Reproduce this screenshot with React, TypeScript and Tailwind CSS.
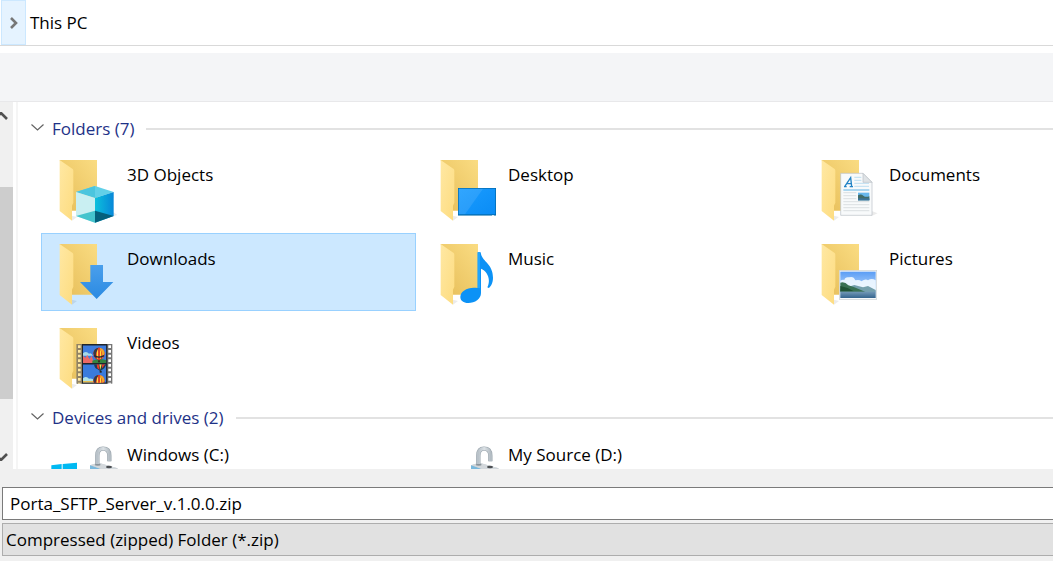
import { useState } from 'react';
import type { ReactNode } from 'react';

type Item = { name: string; art: ReactNode };

function Folder({ children }: { children: ReactNode }) {
  return (
    <svg className="w-16 h-[68px] shrink-0" viewBox="0 0 192 204" fill="none" aria-hidden="true">
      <path d="M51 197V182L66 186Z" fill="#000" opacity=".08" />
      <path d="M14 15H126V167H50Z" fill="url(#folderBack)" />
      <path d="M14 15L53 42Q55 44 55 47V143L51 152V197L14 168Z" fill="url(#folderFront)" />
      {children}
    </svg>
  );
}

// Gradients shared by all the icons
function Gradients() {
  return (
    <svg className="absolute w-0 h-0" aria-hidden="true">
      <defs>
        <linearGradient id="folderBack" x1="0" y1="1" x2="1" y2="0">
          <stop offset="0" stopColor="#e6bd58" />
          <stop offset="1" stopColor="#fadc82" />
        </linearGradient>
        <linearGradient id="folderFront" x1="0" y1="0" x2="1" y2="1">
          <stop offset="0" stopColor="#ffe8a3" />
          <stop offset="1" stopColor="#fddc80" />
        </linearGradient>
        <linearGradient id="screen" x1="0" y1="0" x2="1" y2="1">
          <stop offset="0" stopColor="#1a9cff" />
          <stop offset="1" stopColor="#0a8cf5" />
        </linearGradient>
        <linearGradient id="cubeRight" x1="0" y1="0" x2="1" y2="0">
          <stop offset="0" stopColor="#0cc0dc" />
          <stop offset="1" stopColor="#0787d8" />
        </linearGradient>
        <linearGradient id="arrow" x1="0" y1="0" x2="0" y2="1">
          <stop offset="0" stopColor="#4a9fec" />
          <stop offset="1" stopColor="#2a8ae2" />
        </linearGradient>
        <linearGradient id="sky" x1="0" y1="0" x2="0" y2="1">
          <stop offset="0" stopColor="#5a9df5" />
          <stop offset="1" stopColor="#e2f1fd" />
        </linearGradient>
        <linearGradient id="water" x1="0" y1="0" x2="0" y2="1">
          <stop offset="0" stopColor="#7399b7" />
          <stop offset="1" stopColor="#34648d" />
        </linearGradient>
        <linearGradient id="shackle" x1="0" y1="0" x2="1" y2="0">
          <stop offset="0" stopColor="#b9c2c9" />
          <stop offset=".5" stopColor="#dbe1e5" />
          <stop offset="1" stopColor="#b4bdc4" />
        </linearGradient>
      </defs>
    </svg>
  );
}

const cube = (
  <g>
    <path d="M120 200L187 180L176 172Z" fill="#000" opacity=".08" />
    <path d="M120 93L176 111L120 129L63 111Z" fill="#62d0e8" />
    <path d="M120 93V129L63 111Z" fill="#4bc5de" />
    <path d="M63 111L120 129V203L63 183Z" fill="#c9eff2" />
    <path d="M63 183L120 167V203Z" fill="#45c4cd" />
    <path d="M120 129L176 111V183L120 203Z" fill="url(#cubeRight)" />
    <path d="M120 167L176 183L120 203Z" fill="#04607c" />
  </g>
);

const screen = (
  <g>
    <rect x="66" y="99" width="114" height="83" fill="#0067a8" />
    <rect x="68" y="101" width="110" height="77" fill="url(#screen)" />
    <path d="M68 101H141L87 178H68Z" fill="#fff" opacity=".1" />
    <path d="M66 181H180V183H66Z" fill="#7eb5d4" />
    <path d="M168 180H174V182H168Z" fill="#fff" />
  </g>
);

const documentPage = (
  <g>
    <path d="M164 183L182 175L164 168Z" fill="#000" opacity=".08" />
    <path d="M71 55H138L165 82V181H71Z" fill="#f8fafb" stroke="#bac0c6" strokeWidth="2" />
    <path d="M138 55V82H165Z" fill="#dfe3e6" stroke="#bac0c6" strokeWidth="2" />
    <path d="M83 95L101 68L104 95M90 86H103M81 95H89M98 95H108" stroke="#2384c6" strokeWidth="4" />
    <path d="M112 67H133M112 76H133M112 85H156M112 94H156" stroke="#9fd0ed" strokeWidth="2" />
    <path d="M79 105H157" stroke="#85c6eb" strokeWidth="4" />
    <path d="M79 113H118M79 122H118M79 131H118M79 140H157M79 149H157M79 158H157M79 167H157" stroke="#cdd2d6" strokeWidth="2" />
    <rect x="123" y="113" width="34" height="23" fill="#68b8ed" />
    <path d="M123 121Q132 116 139 122T157 124V136H123Z" fill="#416c69" />
    <path d="M123 130H157V136H123Z" fill="#3c759a" />
  </g>
);

const downArrow = <path d="M106 78H144V129H175L125 180L75 129H106Z" fill="url(#arrow)" />;

const note = (
  <g>
    <path d="M125 40H134C137 68 171 73 171 116C171 131 165 143 158 147L154 145C166 119 153 96 135 89V162C135 180 117 192 97 192C82 192 73 185 73 174C73 155 98 142 125 147Z" fill="#0c92f6" />
    <path d="M125 40H132V148L125 147Z" fill="#20a5ff" />
  </g>
);

const landscape = (
  <g>
    <rect x="67" y="94" width="112" height="87" fill="#f7f9fa" stroke="#c9cfd3" strokeWidth="2" />
    <rect x="70" y="98" width="106" height="79" fill="url(#sky)" />
    <path d="M70 125Q78 120 82 123Q84 113 96 115Q110 110 115 124Q128 121 133 127Q146 118 153 124Q164 116 176 124V155H70Z" fill="#f2f9ff" opacity=".9" />
    <path d="M70 151L112 138L138 145L153 141L176 153V160H70Z" fill="#75a0ad" />
    <path d="M70 131Q83 127 94 139L112 145L132 153L145 159H70Z" fill="#397153" />
    <path d="M70 141L92 147L110 157H70Z" fill="#205335" />
    <rect x="70" y="158" width="106" height="19" fill="url(#water)" />
  </g>
);

function Balloon({ y }: { y: number }) {
  return (
    <g transform={`translate(0 ${y})`}>
      <ellipse cx="132" cy="92" rx="17" ry="18" fill="#e32925" />
      <path d="M115 91Q117 75 132 74Q120 86 123 107Z" fill="#333c46" />
      <path d="M149 91Q147 75 132 74Q144 86 141 107Z" fill="#f1a629" />
      <path d="M132 74Q122 84 126 106L132 111L138 106Q142 84 132 74Z" fill="#ffdf3e" />
      <path d="M132 74V111" stroke="#dc2a24" strokeWidth="5" />
      <path d="M117 98Q132 107 147 98" stroke="#222b35" strokeWidth="4" />
      <rect x="129" y="112" width="6" height="6" fill="#3b2b1f" />
    </g>
  );
}

const film = (
  <g>
    <rect x="65" y="63" width="107" height="119" fill="#777" />
    <rect x="65" y="63" width="17" height="119" fill="#918365" />
    <path d="M73 67V182" stroke="#ffe8a0" strokeWidth="8" strokeDasharray="8 6" />
    <path d="M164 67V182" stroke="#fff" strokeWidth="8" strokeDasharray="8 6" />
    <rect x="81" y="63" width="76" height="119" fill="#20252b" />
    <svg x="84" y="67" width="70" height="53" viewBox="84 67 70 53">
      <rect x="84" y="67" width="70" height="53" fill="#3e7cdd" />
      <path d="M84 91Q94 83 102 92Q108 87 114 98H84Z" fill="#a7d9e6" />
      <path d="M84 98L91 104L97 96L103 108L110 98L117 120H84Z" fill="#eb6965" />
      <path d="M112 113Q132 104 154 112V120H112Z" fill="#348340" />
      <Balloon y={0} />
    </svg>
    <svg x="84" y="124" width="70" height="55" viewBox="84 124 70 55">
      <rect x="84" y="124" width="70" height="55" fill="#397bdc" />
      <path d="M117 124H154Q149 138 141 140L136 145L128 139Q119 137 117 124Z" fill="#1e3e52" />
      <path d="M125 124H131L134 140L127 136ZM141 124H151L141 136Z" fill="#e83729" />
      <path d="M133 124H140L136 140Z" fill="#ffdf3e" />
      <rect x="134" y="144" width="6" height="5" fill="#28221c" />
      <path d="M84 166Q94 158 102 167Q113 165 119 174H84Z" fill="#aee2e6" />
      <path d="M84 174H119V179H84Z" fill="#e7be50" />
      <Balloon y={82} />
    </svg>
  </g>
);

function Drive({ windows }: { windows?: boolean }) {
  return (
    <svg className="w-20 h-[72px] shrink-0" viewBox="0 0 240 216" fill="none" aria-hidden="true">
      <path d="M18 132L42 108H210L234 132V168H18Z" fill="#b9bec2" />
      <path d="M18 132H234V168H18Z" fill="#858c92" />
      {windows && (
        <path d="M19 82L50 78V114H19ZM53 78L96 74V114H53Z" fill="#00b9f2" />
      )}
      <path d="M135 82L160 74L218 91V138H135Z" fill="#c8ced3" />
      <path d="M135 82L181 98V138H135Z" fill="#79b9de" />
      <path d="M137 81L160 74L218 91L181 98Z" fill="#d3d8dc" />
      <ellipse cx="158" cy="80" rx="9" ry="3" fill="#8b949b" />
      <ellipse cx="192" cy="87" rx="9" ry="4" fill="#4c4f53" />
      <path d="M157 78V53Q157 32 174 32Q193 32 193 53V70" stroke="#98a3ab" strokeWidth="13" />
      <path d="M157 78V53Q157 32 174 32Q193 32 193 53V70" stroke="url(#shackle)" strokeWidth="10" />
    </svg>
  );
}

const folders: Item[] = [
  { name: '3D Objects', art: cube },
  { name: 'Desktop', art: screen },
  { name: 'Documents', art: documentPage },
  { name: 'Downloads', art: downArrow },
  { name: 'Music', art: note },
  { name: 'Pictures', art: landscape },
  { name: 'Videos', art: film },
];

function GroupHeading({ title }: { title: string }) {
  return (
    <h2 className="flex items-center h-[30px] pl-[13px] mb-[5px] text-[#1e3287]">
      <button type="button" className="flex items-center gap-2 shrink-0">
        <svg className="w-[13px] h-[7px] -mt-1" viewBox="0 0 13 7" fill="none" stroke="#636363" strokeWidth="1.2" aria-hidden="true">
          <path d="M.5.5L6.5 6L12.5.5" />
        </svg>
        {title}
      </button>
      <span className="flex-1 ml-3 h-[2px] bg-[#e2e2e2]" />
    </h2>
  );
}

export default function App() {
  const [selected, setSelected] = useState('Downloads');
  const [fileName, setFileName] = useState('Porta_SFTP_Server_v.1.0.0.zip');

  return (
    <div className="relative flex flex-col h-screen overflow-hidden bg-white text-black text-[17px] leading-6 font-['Open_Sans',sans-serif]">
      <Gradients />

      {/* Address bar */}
      <nav className="flex items-stretch h-[46px] shrink-0 pl-px border-b border-[#d9d9d9]">
        <button type="button" aria-label="Show locations" className="flex items-center justify-center w-[25px] bg-[#e5f3ff] border border-[#cce8ff]">
          <svg className="w-2 h-3" viewBox="0 0 8 12" fill="none" stroke="#777" strokeWidth="2.6" aria-hidden="true">
            <path d="M1 1L6 6L1 11" />
          </svg>
        </button>
        <a href="#this-pc" className="flex items-center pl-1">This PC</a>
      </nav>

      {/* Toolbar */}
      <div className="h-[49px] mt-[7px] shrink-0 bg-[#f4f5f7] border-b border-[#e8e8ea]" />

      <main className="flex flex-1 min-h-0">
        {/* Scrollbar of the tree pane */}
        <div className="flex flex-col w-3.5 shrink-0 bg-[#f0f0f0] border-r border-white">
          <svg className="w-2 h-2 mt-[10px]" viewBox="0 0 8 8" fill="none" stroke="#505050" strokeWidth="2.6" aria-hidden="true">
            <path d="M-5 7L1 1L7 7" />
          </svg>
          <div className="mt-[67px] h-[212px] bg-[#cdcdcd]" />
          <svg className="w-2 h-2 mt-auto mb-2" viewBox="0 0 8 8" fill="none" stroke="#505050" strokeWidth="2.6" aria-hidden="true">
            <path d="M-5 1L1 7L7 1" />
          </svg>
        </div>
        <div className="w-1 shrink-0 border-r-2 border-[#f5f5f5]" />

        <div className="flex-1 min-w-0 pt-3 overflow-hidden">
          <section className="mb-2">
            <GroupHeading title="Folders (7)" />
            <div className="grid grid-cols-[repeat(3,375px)] gap-1.5 pl-[23px]">
              {folders.map((item) => (
                <button
                  key={item.name}
                  type="button"
                  onClick={() => setSelected(item.name)}
                  className={`flex items-start gap-2 h-[78px] pl-[13px] pt-[5px] border text-left ${
                    selected === item.name ? 'bg-[#cce8ff] border-[#99d1ff]' : 'border-transparent'
                  }`}
                >
                  <Folder>{item.art}</Folder>
                  <span className="pt-2">{item.name}</span>
                </button>
              ))}
            </div>
          </section>

          <section>
            <GroupHeading title="Devices and drives (2)" />
            <div className="grid grid-cols-[repeat(3,375px)] gap-1.5 pl-[23px]">
              <button type="button" className="flex items-start gap-0.5 pl-1 text-left">
                <Drive windows />
                <span className="pt-[5px]">Windows (C:)</span>
              </button>
              <button type="button" className="flex items-start gap-0.5 pl-1 text-left">
                <Drive />
                <span className="pt-[5px]">My Source (D:)</span>
              </button>
            </div>
          </section>
        </div>
      </main>

      {/* File name and type */}
      <footer className="flex flex-col gap-[3px] shrink-0 pt-[18px] pb-[5px] pl-0.5 bg-[#f0f0f0]">
        <input
          type="text"
          aria-label="File name"
          value={fileName}
          onChange={(e) => setFileName(e.target.value)}
          className="w-full h-[33px] pl-[7px] bg-white border border-r-0 border-[#7a7a7a] outline-none"
        />
        <select aria-label="Save as type" className="w-full h-[33px] pl-[3px] appearance-none bg-[#e1e1e1] border border-r-0 border-[#adadad] outline-none">
          <option>Compressed (zipped) Folder (*.zip)</option>
        </select>
      </footer>
    </div>
  );
}
